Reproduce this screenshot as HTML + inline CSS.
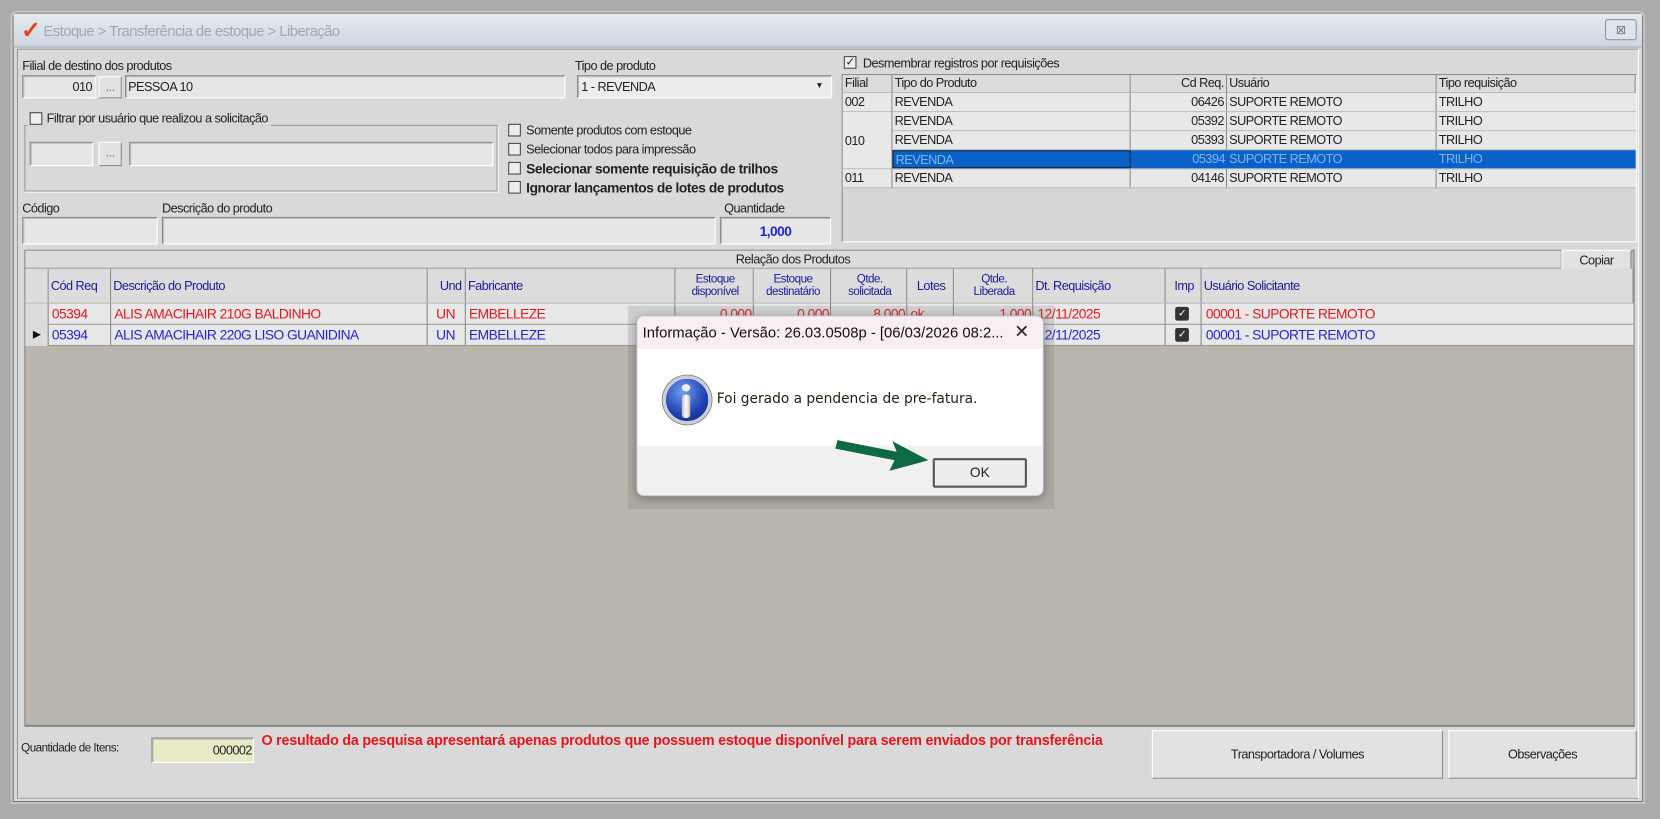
<!DOCTYPE html>
<html><head><meta charset="utf-8"><style>
*{box-sizing:border-box;margin:0;padding:0}
html,body{width:1660px;height:819px;overflow:hidden;background:#ababab}
#r{position:absolute;left:0;top:0;width:1568px;height:774px;transform:scale(1.0587,1.0581);transform-origin:0 0;font-family:"Liberation Sans",sans-serif;font-size:12px;color:#222;letter-spacing:-0.5px}
.a{position:absolute}
.in{position:absolute;background:#e6e6e6;border:1px solid #8a8a8a;border-right-color:#fff;border-bottom-color:#fff;box-shadow:inset 1px 1px 0 #bdbdbd}
.bt{position:absolute;background:#e2e2e2;border:1px solid #fff;border-right-color:#8a8a8a;border-bottom-color:#8a8a8a;text-align:center}
.cb{position:absolute;width:12px;height:12px;border:1px solid #444;background:#eee}
.g{position:absolute;border-right:1px solid #888;border-bottom:1px solid #bbb;overflow:hidden;white-space:nowrap;padding-left:2px}
.h{background:#dcdcdc;color:#222}
.ph{background:#dcdcdc;color:#1a1a9a;text-align:center;line-height:12px;font-size:11px}
.red{color:#e8141c}.blu{color:#1f25d8}
</style></head><body><div id="r">
<div class="a" style="left:12px;top:12px;width:1540px;height:746px;background:#d9d9d9;border:1px solid #777;border-radius:4px 4px 0 0;box-shadow:0 0 0 2px #c4c4c4"></div>
<div class="a" style="left:13px;top:13px;width:1538px;height:32px;background:linear-gradient(#e6ebf1,#ccd5df);border-bottom:1px solid #a9b2bc"></div>
<div class="a" style="left:20px;top:16px;font-size:22px;color:#e8401a;font-weight:bold;letter-spacing:0">✓</div>
<div class="a" style="left:41px;top:21px;font-size:14px;color:#a0a8b2">Estoque &gt; Transferência de estoque &gt; Liberação</div>
<div class="a" style="left:1516px;top:18px;width:30px;height:20px;border:1px solid #8b96a2;border-radius:3px;background:#dfe5ec;color:#777;text-align:center;font-size:12px;line-height:18px">⊠</div>
<div class="a" style="left:16px;top:46px;width:1532px;height:709px;border:1px solid #999;border-right-color:#fff;border-bottom-color:#aaa"></div>

<div class="a" style="left:21px;top:55px">Filial de destino dos produtos</div>
<div class="in" style="left:21px;top:71px;width:70px;height:22px;text-align:right;padding:3px 3px 0 0">010</div>
<div class="bt" style="left:93px;top:72px;width:22px;height:21px;line-height:18px;color:#777">...</div>
<div class="in" style="left:118px;top:71px;width:416px;height:22px;padding:3px 0 0 2px">PESSOA 10</div>
<div class="a" style="left:543px;top:55px">Tipo de produto</div>
<div class="in" style="left:545px;top:71px;width:241px;height:22px;padding:3px 0 0 3px;background:#ededed">1 - REVENDA</div>
<div class="a" style="left:770px;top:76px;font-size:8px">▼</div>

<div class="a" style="left:23px;top:118px;width:447px;height:63px;border:1px solid #999;box-shadow:1px 1px 0 #fff"></div>
<div class="a" style="left:26px;top:105px;background:#d9d9d9;padding:0 3px 0 2px;display:flex;gap:4px"><span class="cb" style="position:relative;top:1px"></span>Filtrar por usuário que realizou a solicitação</div>
<div class="in" style="left:28px;top:134px;width:60px;height:23px"></div>
<div class="bt" style="left:93px;top:134px;width:22px;height:23px;line-height:18px;color:#777">...</div>
<div class="in" style="left:122px;top:134px;width:344px;height:23px"></div>

<div class="cb" style="left:480px;top:117px"></div><div class="a" style="left:497px;top:116px">Somente produtos com estoque</div>
<div class="cb" style="left:480px;top:135px"></div><div class="a" style="left:497px;top:134px">Selecionar todos para impressão</div>
<div class="cb" style="left:480px;top:153px"></div><div class="a" style="left:497px;top:152px;font-weight:bold;font-size:13px;letter-spacing:-0.4px">Selecionar somente requisição de trilhos</div>
<div class="cb" style="left:480px;top:171px"></div><div class="a" style="left:497px;top:170px;font-weight:bold;font-size:13px;letter-spacing:-0.4px">Ignorar lançamentos de lotes de produtos</div>

<div class="a" style="left:21px;top:190px">Código</div>
<div class="in" style="left:21px;top:205px;width:128px;height:26px"></div>
<div class="a" style="left:153px;top:190px">Descrição do produto</div>
<div class="in" style="left:153px;top:205px;width:523px;height:26px"></div>
<div class="a" style="left:684px;top:190px">Quantidade</div>
<div class="in" style="left:680px;top:205px;width:105px;height:26px;text-align:center;padding-top:5px;color:#1f25d8;font-weight:bold;font-size:13px">1,000</div>

<div class="cb" style="left:797px;top:53px;text-align:center;line-height:10px;font-size:11px">✓</div>
<div class="a" style="left:815px;top:53px">Desmembrar registros por requisições</div>
<div class="a" style="left:795px;top:70px;width:751px;height:159px;background:#d6d6d6;border:1px solid #888;border-right-color:#fff;border-bottom-color:#fff"></div>
<div class="g h" style="left:796px;top:71px;width:47px;height:17px">Filial</div>
<div class="g h" style="left:843px;top:71px;width:225px;height:17px">Tipo do Produto</div>
<div class="g h" style="left:1068px;top:71px;width:91px;height:17px;text-align:right;padding-right:2px">Cd Req.</div>
<div class="g h" style="left:1159px;top:71px;width:198px;height:17px">Usuário</div>
<div class="g h" style="left:1357px;top:71px;width:188px;height:17px">Tipo requisição</div>
<div class="g" style="left:796px;top:88px;width:47px;height:18px;background:#e8e8e8;line-height:17px">002</div>
<div class="g" style="left:796px;top:106px;width:47px;height:54px;background:#e8e8e8;line-height:54px">010</div>
<div class="g" style="left:796px;top:160px;width:47px;height:18px;background:#e8e8e8;line-height:17px">011</div>
<div class="a" style="left:843px;top:88px;width:702px;font-size:12px;line-height:17px">
 <div style="display:flex;height:18px;background:#e8e8e8;border-bottom:1px solid #bbb"><span style="width:225px;padding-left:2px;border-right:1px solid #888">REVENDA</span><span style="width:91px;text-align:right;padding-right:2px;border-right:1px solid #888">06426</span><span style="width:198px;padding-left:2px;border-right:1px solid #888">SUPORTE REMOTO</span><span style="padding-left:2px">TRILHO</span></div>
 <div style="display:flex;height:18px;background:#e8e8e8;border-bottom:1px solid #bbb"><span style="width:225px;padding-left:2px;border-right:1px solid #888">REVENDA</span><span style="width:91px;text-align:right;padding-right:2px;border-right:1px solid #888">05392</span><span style="width:198px;padding-left:2px;border-right:1px solid #888">SUPORTE REMOTO</span><span style="padding-left:2px">TRILHO</span></div>
 <div style="display:flex;height:18px;background:#e8e8e8;border-bottom:1px solid #bbb"><span style="width:225px;padding-left:2px;border-right:1px solid #888">REVENDA</span><span style="width:91px;text-align:right;padding-right:2px;border-right:1px solid #888">05393</span><span style="width:198px;padding-left:2px;border-right:1px solid #888">SUPORTE REMOTO</span><span style="padding-left:2px">TRILHO</span></div>
 <div style="display:flex;height:18px;background:#0a62c8;color:#7fb4f0;border-bottom:1px solid #bbb"><span style="width:225px;padding-left:2px;border:1px solid #123">REVENDA</span><span style="width:91px;text-align:right;padding-right:2px">05394</span><span style="width:198px;padding-left:2px">SUPORTE REMOTO</span><span style="padding-left:2px">TRILHO</span></div>
 <div style="display:flex;height:18px;background:#e8e8e8;border-bottom:1px solid #bbb"><span style="width:225px;padding-left:2px;border-right:1px solid #888">REVENDA</span><span style="width:91px;text-align:right;padding-right:2px;border-right:1px solid #888">04146</span><span style="width:198px;padding-left:2px;border-right:1px solid #888">SUPORTE REMOTO</span><span style="padding-left:2px">TRILHO</span></div>
</div>

<div class="a" style="left:23px;top:236px;width:1521px;height:451px;background:#bab6ae;border:1px solid #888;border-bottom:2px solid #888"></div>
<div class="a" style="left:24px;top:237px;width:1450px;height:17px;background:#dcdcdc;border-bottom:1px solid #999;text-align:center;line-height:16px">Relação dos Produtos</div>
<div class="bt" style="left:1475px;top:236px;width:66px;height:21px;line-height:19px">Copiar</div>
<div class="g ph" style="left:24px;top:254px;width:22px;height:33px"></div>
<div class="g ph" style="left:46px;top:254px;width:59px;height:33px;text-align:left;line-height:32px;font-size:12px">Cód Req</div>
<div class="g ph" style="left:105px;top:254px;width:299px;height:33px;text-align:left;line-height:32px;font-size:12px">Descrição do Produto</div>
<div class="g ph" style="left:404px;top:254px;width:36px;height:33px;text-align:right;line-height:32px;font-size:12px;padding-right:3px">Und</div>
<div class="g ph" style="left:440px;top:254px;width:198px;height:33px;text-align:left;line-height:32px;font-size:12px">Fabricante</div>
<div class="g ph" style="left:638px;top:254px;width:74px;height:33px;padding-top:4px">Estoque<br>disponível</div>
<div class="g ph" style="left:712px;top:254px;width:73px;height:33px;padding-top:4px">Estoque<br>destinatário</div>
<div class="g ph" style="left:785px;top:254px;width:72px;height:33px;padding-top:4px">Qtde.<br>solicitada</div>
<div class="g ph" style="left:857px;top:254px;width:44px;height:33px;line-height:32px;font-size:12px">Lotes</div>
<div class="g ph" style="left:901px;top:254px;width:75px;height:33px;padding-top:4px">Qtde.<br>Liberada</div>
<div class="g ph" style="left:976px;top:254px;width:125px;height:33px;text-align:left;line-height:32px;font-size:12px">Dt. Requisição</div>
<div class="g ph" style="left:1101px;top:254px;width:34px;height:33px;line-height:32px;font-size:12px">Imp</div>
<div class="g ph" style="left:1135px;top:254px;width:408px;height:33px;text-align:left;line-height:32px;font-size:12px">Usuário Solicitante</div>

<div class="a" style="left:24px;top:287px;width:1519px;height:20px;background:#e8e8e8;border-bottom:1px solid #999"></div>
<div class="a" style="left:24px;top:307px;width:1519px;height:20px;background:#e8e8e8;border-bottom:1px solid #999"></div>
<div class="a" style="left:0;top:287px;font-size:13px;line-height:19px;width:1568px">
 <div style="position:relative;height:20px" class="red">
  <span class="a" style="left:24px;width:22px;height:20px;background:#dcdcdc;border-right:1px solid #888"></span>
  <span class="a" style="left:49px">05394</span><span class="a" style="left:108px">ALIS AMACIHAIR 210G BALDINHO</span><span class="a" style="left:412px">UN</span><span class="a" style="left:443px">EMBELLEZE</span>
  <span class="a" style="left:638px;width:72px;text-align:right">0,000</span><span class="a" style="left:712px;width:71px;text-align:right">0,000</span><span class="a" style="left:785px;width:70px;text-align:right">8,000</span><span class="a" style="left:860px">ok</span><span class="a" style="left:901px;width:73px;text-align:right">1,000</span>
  <span class="a" style="left:1110px;top:3px;width:13px;height:13px;background:#333;color:#fff;font-size:10px;line-height:13px;text-align:center;border-radius:2px">✓</span>
  <span class="a" style="left:980px">12/11/2025</span><span class="a" style="left:1139px">00001 - SUPORTE REMOTO</span>
 </div>
 <div style="position:relative;height:20px" class="blu">
  <span class="a" style="left:24px;width:22px;height:20px;background:#dcdcdc;border-right:1px solid #888;color:#111;padding-left:7px;font-size:10px">▶</span>
  <span class="a" style="left:49px">05394</span><span class="a" style="left:108px">ALIS AMACIHAIR 220G LISO GUANIDINA</span><span class="a" style="left:412px">UN</span><span class="a" style="left:443px">EMBELLEZE</span>
  <span class="a" style="left:1110px;top:3px;width:13px;height:13px;background:#333;color:#fff;font-size:10px;line-height:13px;text-align:center;border-radius:2px">✓</span>
  <span class="a" style="left:980px">12/11/2025</span><span class="a" style="left:1139px">00001 - SUPORTE REMOTO</span>
 </div>
</div>
<div class="a" style="left:104px;top:287px;width:1px;height:40px;background:#888"></div>
<div class="a" style="left:403px;top:287px;width:1px;height:40px;background:#888"></div>
<div class="a" style="left:439px;top:287px;width:1px;height:40px;background:#888"></div>
<div class="a" style="left:637px;top:287px;width:1px;height:40px;background:#888"></div>
<div class="a" style="left:711px;top:287px;width:1px;height:40px;background:#888"></div>
<div class="a" style="left:784px;top:287px;width:1px;height:40px;background:#888"></div>
<div class="a" style="left:856px;top:287px;width:1px;height:40px;background:#888"></div>
<div class="a" style="left:900px;top:287px;width:1px;height:40px;background:#888"></div>
<div class="a" style="left:975px;top:287px;width:1px;height:40px;background:#888"></div>
<div class="a" style="left:1100px;top:287px;width:1px;height:40px;background:#888"></div>
<div class="a" style="left:1134px;top:287px;width:1px;height:40px;background:#888"></div>

<div class="a" style="left:20px;top:701px;font-size:11px">Quantidade de Itens:</div>
<div class="in" style="left:143px;top:697px;width:97px;height:24px;background:#e9ebc6;text-align:right;padding:4px 1px 0 0">000002</div>
<div class="a" style="left:247px;top:692px;width:833px;overflow:hidden;white-space:nowrap;color:#e8141c;font-weight:bold;font-size:13.5px;letter-spacing:-0.2px">O resultado da pesquisa apresentará apenas produtos que possuem estoque disponível para serem enviados por transferência</div>
<div class="bt" style="left:1088px;top:690px;width:275px;height:46px;line-height:44px;font-size:12px">Transportadora / Volumes</div>
<div class="bt" style="left:1368px;top:690px;width:178px;height:46px;line-height:44px;font-size:12px">Observações</div>

<div class="a" style="left:593px;top:289px;width:403px;height:192px;background:rgba(120,120,120,0.22)"></div>
<div class="a" style="left:601px;top:298px;width:385px;height:171px;background:#fff;border:1px solid #bbb;border-radius:7px;overflow:hidden;box-shadow:0 2px 8px rgba(0,0,0,.3);letter-spacing:0;font-family:'DejaVu Sans','Liberation Sans',sans-serif">
 <div class="a" style="left:0;top:0;width:385px;height:31px;background:#f8eef3;line-height:30px;padding-left:5px;color:#111;font-family:'Liberation Sans',sans-serif;font-size:14px">Informação - Versão: 26.03.0508p - [06/03/2026 08:2...</div>
 <div class="a" style="left:356px;top:5px;font-size:17px;color:#222;font-family:'Liberation Sans',sans-serif">✕</div>
 <div class="a" style="left:24px;top:56px;width:46px;height:46px;border-radius:50%;background:radial-gradient(circle at 40% 30%,#6d9ef0,#1e3fae 60%,#142a7c);border:3px solid #ccd;box-shadow:0 0 0 1px #888"></div>
 <div class="a" style="left:42px;top:64px;width:8px;height:7px;border-radius:50%;background:#eef"></div>
 <div class="a" style="left:42px;top:74px;width:8px;height:22px;border-radius:3px;background:linear-gradient(90deg,#bbb,#fff,#bbb)"></div>
 <div class="a" style="left:75px;top:71px;font-size:13px;color:#221">Foi gerado a pendencia de pre-fatura.</div>
 <div class="a" style="left:0;top:122px;width:385px;height:49px;background:#f0f0f0"></div>
 <div class="a" style="left:279px;top:134px;width:89px;height:28px;border:2px solid #555;border-radius:2px;background:#ededed;text-align:center;line-height:24px;font-size:13px;font-family:'Liberation Sans',sans-serif">OK</div>
</div>
<svg class="a" style="left:785px;top:405px" width="95" height="40" viewBox="0 0 95 40"><path d="M6 11 L62 22 L58 12 L92 30 L55 40 L60 30 L4 19 Z" fill="#0d6a43"/></svg>
</div></body></html>
